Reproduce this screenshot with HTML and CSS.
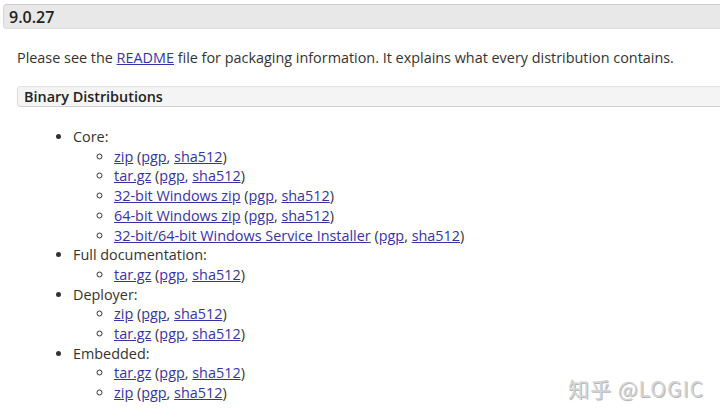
FILE: index.html
```html
<!DOCTYPE html>
<html>
<head>
<meta charset="utf-8">
<link rel="stylesheet" href="styles.css">
</head>
<body>
<div class="page">
  <h3 class="version">9.0.27</h3>
  <div class="section">
    <p class="intro">Please see the <a href="#">README</a> file for packaging information. It explains what every distribution contains.</p>
    <h4 class="sub">Binary Distributions</h4>
    <ul class="dist">
      <li>Core:
        <ul>
          <li><a href="#">zip</a> (<a href="#">pgp</a>, <a href="#">sha512</a>)</li>
          <li><a href="#">tar.gz</a> (<a href="#">pgp</a>, <a href="#">sha512</a>)</li>
          <li><a href="#">32-bit Windows zip</a> (<a href="#">pgp</a>, <a href="#">sha512</a>)</li>
          <li><a href="#">64-bit Windows zip</a> (<a href="#">pgp</a>, <a href="#">sha512</a>)</li>
          <li><a href="#">32-bit/64-bit Windows Service Installer</a> (<a href="#">pgp</a>, <a href="#">sha512</a>)</li>
        </ul>
      </li>
      <li>Full documentation:
        <ul>
          <li><a href="#">tar.gz</a> (<a href="#">pgp</a>, <a href="#">sha512</a>)</li>
        </ul>
      </li>
      <li>Deployer:
        <ul>
          <li><a href="#">zip</a> (<a href="#">pgp</a>, <a href="#">sha512</a>)</li>
          <li><a href="#">tar.gz</a> (<a href="#">pgp</a>, <a href="#">sha512</a>)</li>
        </ul>
      </li>
      <li>Embedded:
        <ul>
          <li><a href="#">tar.gz</a> (<a href="#">pgp</a>, <a href="#">sha512</a>)</li>
          <li><a href="#">zip</a> (<a href="#">pgp</a>, <a href="#">sha512</a>)</li>
        </ul>
      </li>
    </ul>
  </div>
  <div class="watermark">知乎 @LOGIC</div>
</div>
</body>
</html>
```
FILE: styles.css
```css
html, body {
  margin: 0;
  padding: 0;
  background: #fff;
  overflow: hidden;
}
body {
  font-family: "Open Sans", "Noto Sans CJK SC", sans-serif;
  font-size: 14.4px;
  color: #333;
  line-height: 19.7px;
}
.page {
  position: relative;
  width: 720px;
  height: 417px;
  overflow: hidden;
}
.version {
  margin: 4px -20px 0 3px;
  height: 23px;
  box-sizing: content-box;
  padding: 0 0 0 5px;
  background: #e8e8e8;
  border-top: 1px solid #cdcdcd;
  border-bottom: 1px solid #dcdcdc;
  border-left: 1px solid #d6d6d6;
  border-radius: 4px 0 0 4px;
  font-size: 16px;
  font-weight: 600;
  line-height: 24px;
  color: #222;
}
.section {
  padding-left: 17px;
}
.intro {
  margin: 19px 0 0 0;
  line-height: 20px;
}
.intro a, .dist a {
  color: #3434a8;
  text-decoration: underline;
}
.sub {
  margin: 18px -20px 0 0;
  height: 19px;
  padding: 0 0 0 6px;
  background: #f4f4f4;
  border-top: 1px solid #e2e2e2;
  border-bottom: 1px solid #cfcfcf;
  border-left: 1px solid #dcdcdc;
  border-radius: 4px 0 0 4px;
  font-size: 14.4px;
  font-weight: 600;
  line-height: 20px;
  color: #222;
}
.dist {
  margin: 20px 0 0 0;
  padding-left: 56px;
  list-style: disc;
}
.dist ul {
  margin: 0;
  padding-left: 41px;
  list-style: circle;
}
.watermark {
  position: absolute;
  left: 568px;
  top: 374px;
  font-family: "Noto Sans CJK SC", "Open Sans", sans-serif;
  font-size: 21px;
  line-height: 28px;
  color: #d4d4d4;
  text-shadow: 1px 1px 0 #b8b8b8;
  letter-spacing: 1px;
}
```
